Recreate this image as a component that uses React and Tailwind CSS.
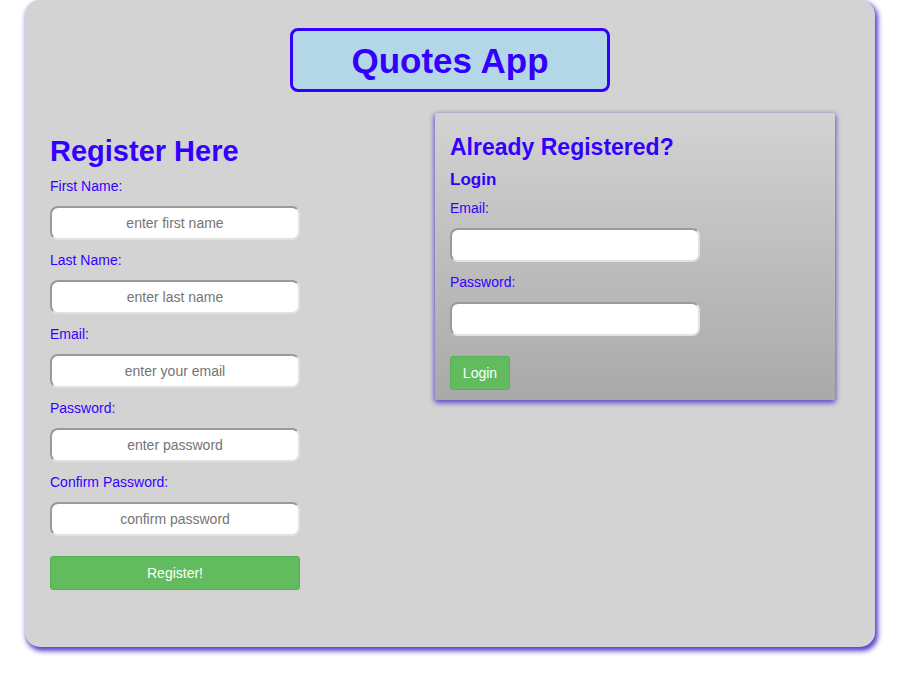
import React from "react";

const Field = ({ label, placeholder, type = "text" }) => (
  <div className="flex flex-col">
    <label className="mb-3 text-[14px] leading-4 text-[#3300ff]">{label}</label>
    <input
      type={type}
      placeholder={placeholder}
      className="mb-3 h-[34px] w-[250px] rounded-[8px] border-2 border-t-[#9a9a9a] border-l-[#9a9a9a] border-r-[#e2e2e2] border-b-[#e2e2e2] bg-white text-center text-[14px] text-[#333] placeholder:text-[#757575] outline-none"
    />
  </div>
);

const App = () => {
  return (
    <div className="min-h-[674px] bg-white pl-[25px] font-['Liberation_Sans',Arial,sans-serif]">
      <div className="h-[647px] w-[850px] rounded-[15px] bg-[#d3d3d3] pt-[28px] shadow-[2px_3px_5px_1px_rgba(70,40,200,0.9)]">
        {/* title */}
        <div className="flex justify-center">
          <div className="flex h-[64px] w-[320px] items-center justify-center rounded-[8px] border-[3px] border-[#3300ff] bg-[#b3d7e6]">
            <h1 className="text-[35px] font-bold leading-none text-[#3300ff]">Quotes App</h1>
          </div>
        </div>

        <div className="mt-[21px] flex">
          {/* register */}
          <div className="w-[410px] pl-[25px] pt-[21px]">
            <h2 className="mb-[10px] text-[29px] font-bold leading-[34px] text-[#3300ff]">Register Here</h2>
            <Field label="First Name:" placeholder="enter first name" />
            <Field label="Last Name:" placeholder="enter last name" />
            <Field label="Email:" placeholder="enter your email" />
            <Field label="Password:" placeholder="enter password" type="password" />
            <Field label="Confirm Password:" placeholder="confirm password" type="password" />
            <button className="mt-2 h-[34px] w-[250px] rounded-[3px] border border-[#56b055] bg-[#62bb5f] text-[14px] text-white">
              Register!
            </button>
          </div>

          {/* login */}
          <div className="h-[287px] w-[400px] rounded-[3px] bg-gradient-to-b from-[#d3d3d3] to-[#a9a9a9] px-[15px] pt-[20px] shadow-[0_2px_5px_1px_rgba(70,40,200,0.8)]">
            <h2 className="text-[23px] font-bold leading-7 text-[#3300ff]">Already Registered?</h2>
            <h3 className="mt-[9px] mb-[10px] text-[17px] font-bold leading-5 text-[#3300ff]">Login</h3>
            <Field label="Email:" />
            <Field label="Password:" type="password" />
            <button className="mt-2 h-[34px] w-[60px] rounded-[3px] border border-[#56b055] bg-[#62bb5f] text-[14px] text-white">
              Login
            </button>
          </div>
        </div>
      </div>
    </div>
  );
};

export default App;
